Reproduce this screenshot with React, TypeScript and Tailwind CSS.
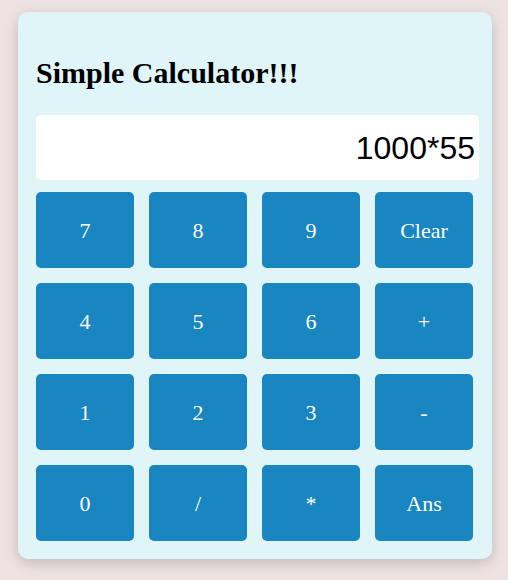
import React from "react";

const keys = ["7", "8", "9", "Clear", "4", "5", "6", "+", "1", "2", "3", "-", "0", "/", "*", "Ans"];

export default function App() {
  return (
    <div className="min-h-[580px] w-full bg-[#eee2e2] pt-[12px] pl-[18px]">
      <div className="w-[474px] rounded-[10px] bg-[#dff5f8] pt-[46px] px-[18px] pb-[18px] shadow-[0_4px_14px_rgba(0,0,0,0.18)]">
        <h2 className="m-0 text-[30px] leading-[30px] font-bold text-black" style={{ fontFamily: '"Liberation Serif", "Times New Roman", serif' }}>
          Simple Calculator!!!
        </h2>
        <div
          className="mt-[27px] flex h-[65px] w-[443px] items-center justify-end rounded-[5px] bg-white pr-[4px] text-[32px] text-black"
          style={{ fontFamily: '"Liberation Sans", Arial, sans-serif' }}
        >
          1000*55
        </div>
        <div className="mt-[12px] grid grid-cols-[repeat(4,98px)] auto-rows-[76px] gap-[15px]">
          {keys.map((k) => (
            <button
              key={k}
              className="flex items-center justify-center rounded-[5px] bg-[#1985c1] text-[22px] text-white"
              style={{ fontFamily: '"Liberation Serif", "Times New Roman", serif' }}
            >
              {k}
            </button>
          ))}
        </div>
      </div>
    </div>
  );
}
